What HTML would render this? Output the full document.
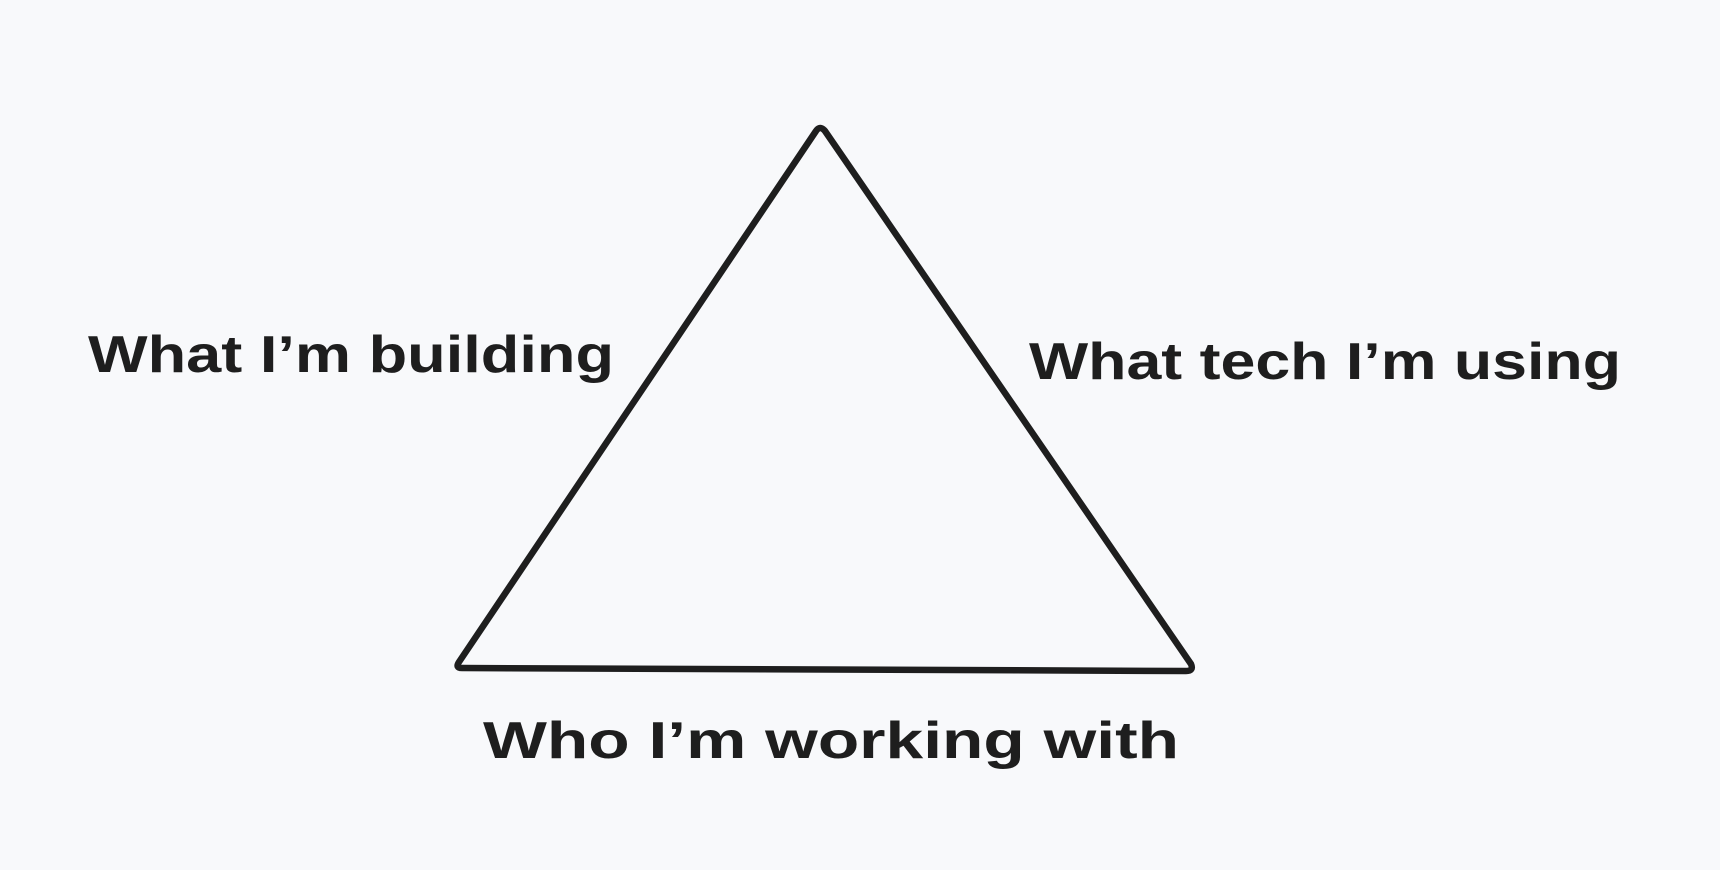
<!DOCTYPE html>
<html><head><meta charset="utf-8"><style>
html,body{margin:0;padding:0;background:#f8f9fb;}
svg{display:block}
text{font-family:"Liberation Sans",sans-serif;font-weight:bold;fill:#1e1e1e;font-size:52px;}
</style></head><body>
<svg width="1720" height="870" viewBox="0 0 1720 870" xmlns="http://www.w3.org/2000/svg">
<rect width="1720" height="870" fill="#f8f9fb"/>
<path d="M816 131 Q820 125 825 131 L1191 664 Q1194 671 1186 671 L462 668 Q455 668 459 662 Z" fill="none" stroke="#1e1e1e" stroke-width="6.5" stroke-linejoin="round"/>
<text x="88" y="372" textLength="526" lengthAdjust="spacingAndGlyphs">What I’m building</text>
<text x="1029" y="379" textLength="592" lengthAdjust="spacingAndGlyphs">What tech I’m using</text>
<text x="483" y="758" textLength="696" lengthAdjust="spacingAndGlyphs">Who I’m working with</text>
</svg>
</body></html>
